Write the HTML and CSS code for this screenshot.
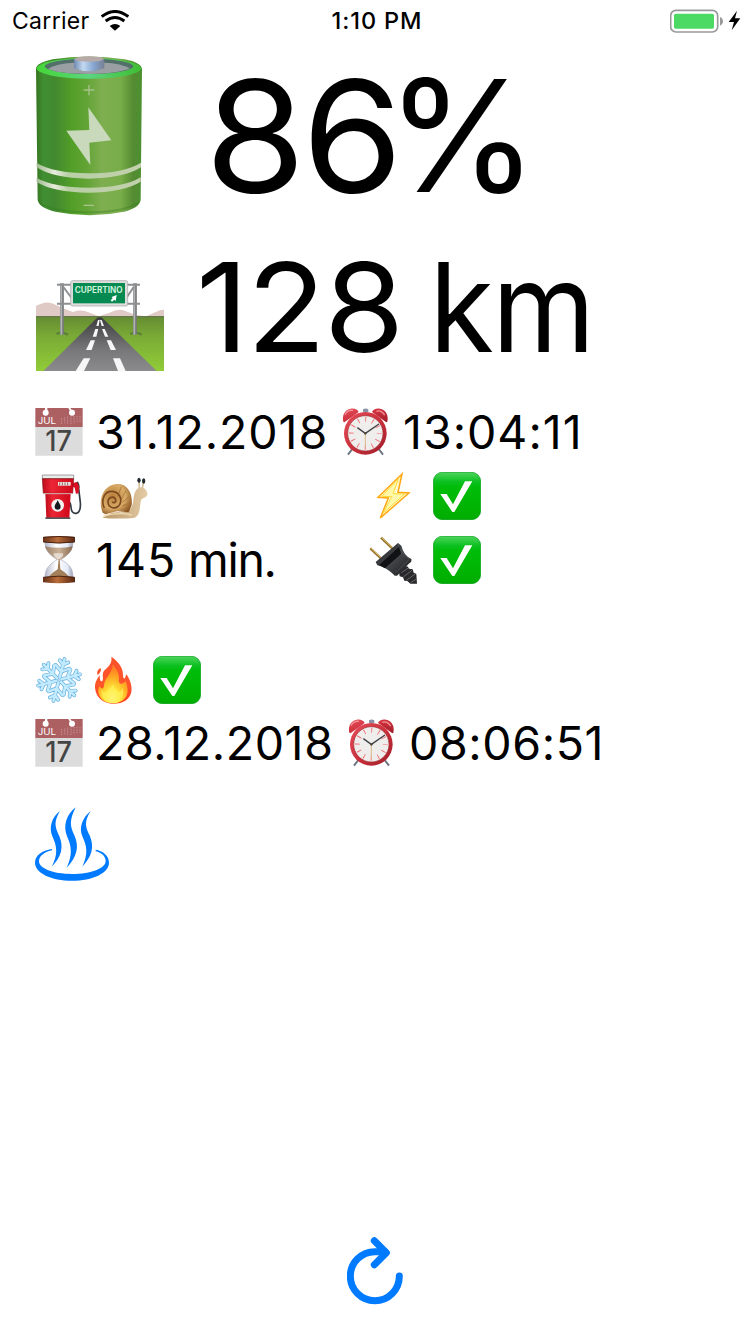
FILE: index.html
```html
<!DOCTYPE html>
<html lang="de">
<head>
<meta charset="utf-8">
<title>Battery status</title>
<link rel="stylesheet" href="styles.css">
</head>
<body>
<svg class="defs" aria-hidden="true">
  <defs>
    <linearGradient id="cell" x1="0" x2="1" y1="0" y2="0"><stop offset="0" stop-color="#35741f"/><stop offset=".07" stop-color="#408f32"/><stop offset=".18" stop-color="#42892f"/><stop offset=".34" stop-color="#529f28"/><stop offset=".48" stop-color="#63a436"/><stop offset=".62" stop-color="#7eae50"/><stop offset=".8" stop-color="#78ad49"/><stop offset=".92" stop-color="#548b32"/><stop offset="1" stop-color="#4b9130"/></linearGradient>
    <linearGradient id="cap" x1="0" x2="1" y1="0" y2="0"><stop offset="0" stop-color="#6f88b0"/><stop offset=".3" stop-color="#c3d9f0"/><stop offset=".65" stop-color="#86a5cf"/><stop offset="1" stop-color="#777f93"/></linearGradient>
    <linearGradient id="rim" x1="0" x2="1" y1="0" y2="0"><stop offset="0" stop-color="#44d636"/><stop offset=".5" stop-color="#5bd580"/><stop offset="1" stop-color="#3fbd32"/></linearGradient>
    <linearGradient id="band" x1="0" x2="1" y1="0" y2="0"><stop offset="0" stop-color="#a1bb90"/><stop offset=".17" stop-color="#e7ecdb"/><stop offset=".3" stop-color="#b9cfa6"/><stop offset="1" stop-color="#c2d1ad"/></linearGradient>
    <linearGradient id="grass" x1="0" x2="0" y1="0" y2="1"><stop offset="0" stop-color="#648a32"/><stop offset=".35" stop-color="#79a936"/><stop offset="1" stop-color="#90cc37"/></linearGradient>
    <linearGradient id="asphalt" x1="0" x2="0" y1="0" y2="1"><stop offset="0" stop-color="#3d3d3f"/><stop offset=".6" stop-color="#77777a"/><stop offset="1" stop-color="#8b8b8e"/></linearGradient>
    <linearGradient id="check" x1="0" x2="0" y1="0" y2="1"><stop offset="0" stop-color="#4ed55b"/><stop offset=".2" stop-color="#0bc020"/><stop offset=".3" stop-color="#00bd09"/><stop offset="1" stop-color="#00ad00"/></linearGradient>
    <linearGradient id="red" x1="0" x2="1" y1="0" y2="0"><stop offset="0" stop-color="#bd0c1b"/><stop offset=".3" stop-color="#ec2635"/><stop offset="1" stop-color="#cf0719"/></linearGradient>
    <radialGradient id="shell" cx=".38" cy=".4" r=".68"><stop offset="0" stop-color="#b9803c"/><stop offset=".6" stop-color="#d9ad68"/><stop offset="1" stop-color="#8c5623"/></radialGradient>
    <linearGradient id="flesh" x1="0" x2="1" y1="0" y2="0"><stop offset="0" stop-color="#ba9767"/><stop offset="1" stop-color="#e3cba5"/></linearGradient>
    <linearGradient id="wood" x1="0" x2="1" y1="0" y2="0"><stop offset="0" stop-color="#653018"/><stop offset=".45" stop-color="#b96d3a"/><stop offset="1" stop-color="#572611"/></linearGradient>
    <linearGradient id="glass" x1="0" x2="1" y1="0" y2="0"><stop offset="0" stop-color="#b5b9ce"/><stop offset=".4" stop-color="#fff"/><stop offset=".8" stop-color="#e6ebf8"/><stop offset="1" stop-color="#9ca1b5"/></linearGradient>
    <linearGradient id="sand" x1="0" x2="1" y1="0" y2="0"><stop offset="0" stop-color="#9a8069"/><stop offset=".5" stop-color="#cbb196"/><stop offset="1" stop-color="#8a6c50"/></linearGradient>
    <linearGradient id="clockred" x1="0" x2="1" y1="0" y2="1"><stop offset="0" stop-color="#e8505c"/><stop offset=".5" stop-color="#cc303c"/><stop offset="1" stop-color="#9f1d29"/></linearGradient>
    <linearGradient id="flame" x1="0" x2="0" y1="0" y2="1"><stop offset="0" stop-color="#fb5129"/><stop offset=".6" stop-color="#ff562b"/><stop offset="1" stop-color="#fb401d"/></linearGradient>
    <radialGradient id="core" cx=".48" cy=".86" r=".75"><stop offset="0" stop-color="#fffcb5"/><stop offset=".3" stop-color="#ffe839"/><stop offset=".7" stop-color="#ffab24"/><stop offset="1" stop-color="#ff8125"/></radialGradient>
    <linearGradient id="rubber" x1="0" x2="1" y1="0" y2="1"><stop offset="0" stop-color="#1c1d20"/><stop offset=".5" stop-color="#45484b"/><stop offset="1" stop-color="#151618"/></linearGradient>

    <symbol id="i-calendar" viewBox="45 39 144 144">
      <path d="M46 96h142v86H46z" fill="#dcdcdc"/><path d="M46 39h142v57H46z" fill="#ac6062"/>
      <circle cx="77" cy="53" r="9" fill="#fff"/><circle cx="156" cy="53" r="9" fill="#fff"/><path d="M75 39h7v10h-7zM145 39h6l6 9-5 3z" fill="#fff"/>
      <path d="M125 69v18M134 67v20M143 65v22M153 64v23M162 63v22M171 63v20M180 63v20" stroke="#c99295" stroke-width="3" stroke-dasharray="3 2"/>
      <text x="53" y="87" class="cal-month" textLength="55" lengthAdjust="spacingAndGlyphs">JUL</text><text x="76" y="167" class="cal-day" textLength="80" lengthAdjust="spacingAndGlyphs">17</text>
    </symbol>
    <symbol id="i-clock" viewBox="33 39 144 144">
      <path d="M67 162l-13 17M146 162l13 17" stroke="#6e7684" stroke-width="6"/>
      <path d="M40 80c-5-19 5-37 22-39 12-2 21 3 24 10L43 82zM172 80c5-19-5-37-22-39-12-2-21 3-24 10l43 31z" fill="url(#clockred)"/>
      <path d="M45 59c5-11 15-14 24-13M139 49c10-4 21 2 25 12" stroke="#f39197" stroke-width="4" fill="none"/>
      <path d="M99 43q8-5 16 0v9H99z" fill="#8992a7"/>
      <circle cx="106" cy="115" r="64" fill="url(#clockred)"/><circle cx="106" cy="115" r="53" fill="#f0eeec" stroke="#9e3037" stroke-width="2"/>
      <circle cx="106" cy="115" r="42" fill="none" stroke="#f0676e" stroke-width="15" stroke-dasharray="2.5 19.49" stroke-dashoffset="1.2"/>
      <path d="M106 115v42" stroke="#d8b989" stroke-width="3"/><path d="M106 115L82 98M106 115l41-28" stroke="#404146" stroke-width="4"/><circle cx="106" cy="115" r="4" fill="#504b42"/>
    </symbol>
    <symbol id="i-pump" viewBox="45 231 144 144">
      <path d="M158 270l15-7q5 7 3 18l5 41q2 30-12 33-15 2-16-19-1-12-6-15" fill="none" stroke="#343b43" stroke-width="5"/>
      <path d="M160 264l11-3 6 13-1 20-8 3-4-19-6-4z" fill="#db1123"/>
      <path d="M76 293h76l-4 78H79z" fill="url(#red)"/><path d="M76 367h75v5H76z" fill="#53565a"/>
      <path d="M67 240h94v11H67z" fill="#eaebeb" stroke="#777" stroke-width="2"/><path d="M67 251h94l-3 44H70z" fill="url(#red)" stroke="#82121a" stroke-width="2"/>
      <path d="M70 296h88" stroke="#d9b6b6" stroke-width="3"/><path d="M114 261h38v11h-38z" fill="#eee5df"/><path d="M119 262v9M127 262v9M135 262v9M143 262v9" stroke="#8a6266" stroke-width="3"/>
      <circle cx="113" cy="331" r="19" fill="#f4f1f0"/><path d="M113 316c4 9 9 13 9 19a9 9 0 0 1-18 0c0-6 5-10 9-19" fill="#16191d"/>
    </symbol>
    <symbol id="i-snail" viewBox="237 231 147 144">
      <path d="M247 369c20-8 20-18 48-17 30 3 42-12 45-35 2-22 6-36 22-40 13-2 21 14 20 22-2 9-17 9-19 17-5 22-1 43-19 52-19 4-77 3-97 1z" fill="url(#flesh)"/>
      <path d="M358 283l-1-25M367 281l4-22" stroke="#d5bf9c" stroke-width="5"/><ellipse cx="357" cy="256" rx="5" ry="8" fill="#222b30"/><ellipse cx="371" cy="258" rx="5" ry="8" fill="#222b30"/>
      <path d="M248 353c-16-38 2-82 40-86 34-3 51 27 47 63l-9 22-35-3-35 9z" fill="url(#shell)"/>
      <path d="M304 275l-11 30M318 287l-15 27M328 304l-21 18M332 323l-26 10" stroke="#a56d31" stroke-width="3" opacity=".7"/>
      <path d="M253 339c-12-25 1-52 24-50 20 2 31 22 22 40-10 17-35 10-35-8 0-15 18-20 23-7 2 8-6 12-10 6" stroke="#7d4a20" stroke-width="5" fill="none"/>
      <path d="M250 363q46-13 86-3" stroke="#efd8ae" stroke-width="4" fill="none"/>
    </symbol>
    <symbol id="i-hourglass" viewBox="45 423 144 144">
      <path d="M75 440h84c0 29-16 40-36 54 23 13 36 23 36 53H75c0-29 15-39 36-53-21-14-36-26-36-54z" fill="url(#glass)" stroke="#a9aec1" stroke-width="2"/>
      <path d="M75 454q42 9 83 0-3 22-38 41h-6q-36-22-39-41z" fill="url(#sand)"/><path d="M101 475h28q3 9-10 17l-3 4-5-5q-12-7-10-16" fill="#eee9e5" opacity=".75"/>
      <path d="M116 492h3l2 31q21 14 27 24H85q7-10 28-24z" fill="#a3805b"/>
      <path d="M69 426q47-6 96 0v15q-48 8-96 0zM69 547q47-8 96 0v15q-48 6-96 0z" fill="url(#wood)"/><path d="M70 441q47 6 94 0M70 547q47-7 94 0M70 427q47-5 94 0" stroke="#4b2412" stroke-width="3" fill="none"/>
    </symbol>
    <symbol id="i-bolt" viewBox="117 231 144 144">
      <path d="M216 237l-72 70 31 2-24 60 86-75-33-2z" fill="#fffad0" stroke="#ffa812" stroke-width="4.5"/><path d="M206 251l-17 45 35 1-65 58 26-50-30-1z" fill="#fff9a9" stroke="#ffd83b" stroke-width="3"/>
    </symbol>
    <symbol id="i-plug" viewBox="117 423 144 144">
      <path d="M153 428l37 35M121 460l37 35" stroke="#91702c" stroke-width="7"/><path d="M154 427l37 35M122 459l37 35" stroke="#dfbd60" stroke-width="3"/>
      <path d="M216 516l16-2 5 7 11 2 3 10 8 4 2 29h-20l-9-8-9-1-4-10-10-3-2-12z" fill="#29292b"/><path d="M214 533l21-14M220 546l26-20M229 556l28-20M242 563l18-11" stroke="#66676a" stroke-width="3"/>
      <path d="M204 444l10 8q7 29 30 40 2 9-6 13l-37 37q-8 2-11-4-22-21-48-27l-5-10z" fill="url(#rubber)"/><path d="M209 454l4 23-48 43-18-10z" fill="#101214"/><path d="M204 446q4 24 34 47l-41 40" stroke="#57595c" stroke-width="2" fill="none"/>
    </symbol>
    <symbol id="i-check" viewBox="310 231 144 144">
      <rect x="311" y="232" width="142" height="142" rx="27" fill="url(#check)" stroke="#009c16" stroke-width="2"/>
      <path d="M332 297h19l19 31 36-69h22l-54 92h-6z" fill="#fff"/>
    </symbol>
    <path id="snow-arm" d="M117 97V40M117 79L96 64M117 79l21-15M117 58l-13-11M117 58l13-11"/>
    <g id="snow-star"><use href="#snow-arm" transform="rotate(15 117 105)"/><use href="#snow-arm" transform="rotate(75 117 105)"/><use href="#snow-arm" transform="rotate(135 117 105)"/><use href="#snow-arm" transform="rotate(195 117 105)"/><use href="#snow-arm" transform="rotate(255 117 105)"/><use href="#snow-arm" transform="rotate(315 117 105)"/></g>
    <symbol id="i-snow" viewBox="45 33 144 144">
      <use href="#snow-star" fill="none" stroke="#64afdc" stroke-width="11.5" stroke-linecap="round"/>
      <use href="#snow-star" fill="none" stroke="#c3ebff" stroke-width="7.5" stroke-linecap="round"/>
    </symbol>
    <symbol id="i-fire" viewBox="207 33 144 144">
      <path d="M274 35c13 9 35 28 35 53 0 13 4 17 7 8l3-8c12 16 18 36 15 53-5 23-25 35-53 35-31 0-53-18-56-47-1-16 6-27 14-39 0 10 1 20 7 19 7-7-2-20 6-32 14-13 25-22 22-42z" fill="url(#flame)"/><path d="M242 69c3 12-4 16-9 21-4-10 1-17 9-21z" fill="#fb5129"/>
      <path d="M278 58c10 13 23 29 18 50 4 14 14 8 21 1 7 17 9 36 0 48-8 13-24 18-38 18-23 0-41-13-44-33-1-8 1-14 4-18 5 9 12 8 13-2 0-25 26-33 26-64z" fill="url(#core)"/>
      <path d="M280 117c3 14 10 22 17 24 7-2 9-7 11-12 6 23-2 44-29 44-24 0-38-18-34-39 7 12 16 8 20 1 5-7 13-11 15-18z" fill="#fff15a" opacity=".7"/>
    </symbol>
  </defs>
</svg>

<header class="status">
  <div class="carrier"><span class="carrier-name">Carrier</span>
    <svg class="wifi" viewBox="303 28 84 63"><path d="M305 48q40-31 80 0M317 61q28-21 56 0" fill="none" stroke="#000" stroke-width="9"/><path d="M329 76q16-12 32 0l-16 14z"/></svg>
  </div>
  <div class="clock">1:10 PM</div>
  <svg class="power" viewBox="510 25 216 72"><rect x="512" y="29" width="141" height="65" rx="16" fill="none" stroke="#999" stroke-width="5"/><rect x="522" y="39" width="120" height="45" rx="5" fill="#4cd964"/><path d="M660 49q9 4 9 13t-9 13z" fill="#999"/><path d="M711 30l-25 34h16l-7 25 26-36h-16z"/></svg>
</header>

<main class="panel">
  <section class="row charge">
    <svg class="cell" viewBox="108 168 318 480">
      <path d="M108 208q-1-19 50-30 108-17 216 0 51 10 52 30l-4 392q-4 24-50 35-103 21-206 0-48-11-53-35z" fill="url(#cell)"/>
      <ellipse cx="267" cy="205" rx="157" ry="31" fill="url(#rim)"/><ellipse cx="267" cy="199" rx="133" ry="23" fill="#526f6a"/><path d="M144 207q26-17 74-19h96q48 2 76 17-31 16-123 17-92-1-123-15z" fill="#9a9fa4"/>
      <path d="M222 177q45-14 91 0v28q-46 18-91 0z" fill="url(#cap)"/><ellipse cx="267" cy="177" rx="43" ry="8" fill="#b6aaa9"/>
      <path d="M110 489q50 30 155 31 107 0 158-32v14q-52 33-158 34-106-1-155-34zM110 534q50 28 155 29 107 0 157-31v13q-52 32-157 33-106-1-155-32z" fill="url(#band)"/>
      <path d="M265 322l69 99-66 7 3 67-72-103 69-2z" fill="#c8d9bc"/><path d="M251 270h32M267 255v31M251 616h31" stroke="#a6c48b" stroke-width="4"/>
      <path d="M119 610q43 26 148 27 103-1 147-28" stroke="#32771c" stroke-width="5" fill="none" opacity=".35"/>
    </svg>
    <span class="percent"><span class="amount">86</span><span class="sign-percent">%</span></span>
  </section>

  <section class="row range">
    <svg class="road" viewBox="48 60 384 273">
      <path d="M48 138q28-16 48-8l34 15 28 11q27-9 47 1l31 12 33-11q26-13 45-6l33 13 32 4 21-10q21-11 32-10v24H48z" fill="#dfcac6"/><path d="M48 168h384v165H48z" fill="url(#grass)"/><path d="M48 170h384" stroke="#657451" stroke-width="3"/>
      <path d="M233 172h12l165 161H70z" fill="url(#asphalt)"/>
      <path d="M234 180h5l-3 18h-7zM226 207h9l-6 23h-11zM212 241h13l-10 29h-17zM191 295h20l-19 38h-25zM240 180h5l7 18h-7zM246 207h8l11 23h-10zM260 241h13l15 29h-16zM279 295h21l17 38h-23z" fill="#f6f6f6"/>
      <path d="M110 222q15-9 34 2M331 222q16-9 34 2" stroke="#5c8037" stroke-width="7" fill="none"/><path d="M126 70v154M345 70v154" stroke="#77787a" stroke-width="11"/><path d="M124 70v154M343 70v154" stroke="#b2b4b5" stroke-width="5"/>
      <path d="M111 74h249M111 131h249M130 81l25 33M341 81l-22 33" stroke="#8d9092" stroke-width="6" fill="none"/>
      <rect x="152" y="62" width="171" height="76" rx="5" fill="#ddd" stroke="#9ea09f" stroke-width="2"/><rect x="159" y="69" width="156" height="61" fill="#078952"/><text x="164" y="98" class="sign" textLength="144" lengthAdjust="spacingAndGlyphs">CUPERTINO</text><path d="M275 111l15-6-3 18-4-4-7 6-4-4 6-6z" fill="#fff"/>
    </svg>
    <span class="km"><span class="distance">128</span><span class="unit"> km</span></span>
  </section>

  <section class="details">
    <div class="row stamp"><svg class="emoji"><use href="#i-calendar"/></svg><span class="date date-a">31.12.2018</span><svg class="emoji"><use href="#i-clock"/></svg><span class="time time-a">13:04:11</span></div>
    <div class="row pair"><svg class="emoji"><use href="#i-pump"/></svg><svg class="emoji snail"><use href="#i-snail"/></svg><svg class="emoji"><use href="#i-bolt"/></svg><svg class="emoji"><use href="#i-check"/></svg></div>
    <div class="row pair"><svg class="emoji"><use href="#i-hourglass"/></svg><span class="minutes"><span class="count">145</span> min.</span><svg class="emoji"><use href="#i-plug"/></svg><svg class="emoji"><use href="#i-check"/></svg></div>
  </section>

  <section class="climate">
    <div class="row modes"><svg class="emoji"><use href="#i-snow"/></svg><svg class="emoji"><use href="#i-fire"/></svg><svg class="emoji"><use href="#i-check"/></svg></div>
    <div class="row stamp stamp-late"><svg class="emoji"><use href="#i-calendar"/></svg><span class="date date-b">28.12.2018</span><svg class="emoji"><use href="#i-clock"/></svg><span class="time time-b">08:06:51</span></div>
    <svg class="steam" viewBox="45 486 222 222" fill="#007aff">
      <path d="M120 498C95 516 86 548 97 574c14 30 18 54-2 91 29-28 37-59 23-91-14-30-17-43 2-76zM167 487c-29 22-38 56-26 87 14 30 17 56-1 94 31-32 38-63 24-95-14-28-17-46 3-86zM212 498c-25 20-36 50-25 76 14 30 18 52 0 91 29-30 36-59 23-91-15-30-18-43 2-76z"/>
      <path d="M96 612C66 616 45 632 45 653c0 31 49 54 111 54s111-23 111-54c0-22-20-36-40-39v5c18 4 30 15 30 29 0 22-43 39-101 39S57 670 57 649c0-15 14-27 39-33z"/>
    </svg>
  </section>
</main>

<footer class="actions"><svg class="refresh" viewBox="51 36 168 204" fill="none" stroke="#007aff" stroke-width="21" stroke-linecap="round" stroke-linejoin="round"><path d="M208 153A73.500 73.500 0 1 1 135 80h30"/><path d="M133 47l36 36-36 36"/></svg></footer>
</body>
</html>
```

FILE: styles.css
```css
* { box-sizing: border-box; }
body {
  margin: 0;
  width: 750px;
  height: 1334px;
  display: flex;
  flex-direction: column;
  background: #fff;
  color: #000;
  font-family: Inter, "Liberation Sans", sans-serif;
  white-space: nowrap;
  overflow: hidden;
}
svg { display: block; flex: none; }
.defs { width: 0; height: 0; position: absolute; }
.status {
  height: 40px;
  display: grid;
  grid-template-columns: 320px 114px 1fr;
  align-items: center;
  font-size: 23px;
  line-height: 40px;
}
.carrier { display: flex; align-items: center; padding-left: 12px; }
.carrier-name { width: 89px; letter-spacing: 0.3px; }
.wifi { width: 28px; height: 21px; }
.clock { text-align: center; font-weight: 500; font-size: 23.500px; letter-spacing: 0.9px; padding-top: 1px; }
.power { width: 72px; height: 24px; justify-self: end; margin-right: 8px; }
.row { display: flex; align-items: center; }
.charge { height: 191px; padding-left: 36px; font-size: 155px; line-height: 191px; }
.cell { width: 106px; height: 160px; margin-right: 63px; }
.percent, .km { display: flex; white-space: pre; }
.amount { letter-spacing: -3.500px; transform: scaleX(1.05); transform-origin: left; }
.sign-percent { margin-left: -4px; }
.range { height: 152px; padding-left: 36px; font-size: 124px; line-height: 152px; }
.road { width: 128px; height: 91px; margin: 36px 32px 0 0; }
.distance { letter-spacing: -2px; transform: scaleX(1.048); transform-origin: left; }
.unit { letter-spacing: -2px; margin-left: 5px; transform: scaleX(0.95); transform-origin: left; }
.details { padding-top: 17px; }
.details .row, .climate .row { height: 64px; padding-left: 35px; font-size: 46.5px; line-height: 64px; }
.emoji { width: 48px; height: 48px; }
.stamp { display: grid; grid-template-columns: 48px 258px 48px 1fr; }
.stamp-late { grid-template-columns: 48px 264px 48px 1fr; }
.date { padding-left: 13px; }
.time { padding-left: 14px; }
.date-a { letter-spacing: 0.9px; }
.time-a { letter-spacing: 1px; }
.date-b, .time-b { letter-spacing: 0.6px; }
.pair { display: grid; grid-template-columns: 48px 286px 64px 48px; }
.snail { width: 49px; margin-left: 16px; }
.minutes { padding-left: 13px; letter-spacing: -1.3px; }
.count { letter-spacing: 1px; }
.climate { padding-top: 56px; }
.modes { gap: 6px; }
.modes .emoji:last-child { margin-left: 10px; }
.climate .stamp { height: 63px; line-height: 63px; }
.climate .stamp .emoji { margin-bottom: 1px; }
.steam { width: 74px; height: 74px; margin: 32px 0 0 35px; }
.actions { margin-top: auto; padding-bottom: 29px; display: flex; justify-content: center; }
.refresh { width: 56px; height: 68px; }
.cal-month { font-size: 26px; fill: #fff; }
.cal-day { font-size: 84px; font-weight: 500; fill: #454545; }
.sign { font-size: 25px; font-weight: 700; fill: #c9f0d8; }
```
